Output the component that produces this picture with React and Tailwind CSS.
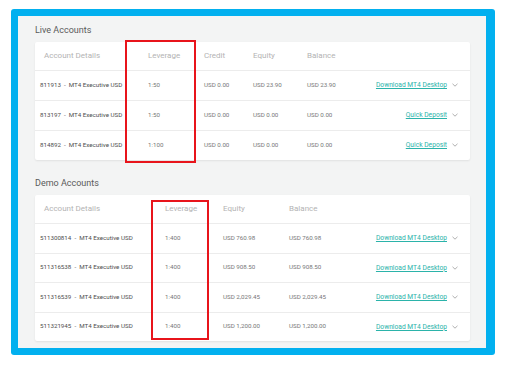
import { useMemo } from "react";

const liveAccounts = [
  { id: "811913", leverage: "1:50", credit: "USD 0.00", equity: "USD 23.90", balance: "USD 23.90", action: "Download MT4 Desktop" },
  { id: "813197", leverage: "1:50", credit: "USD 0.00", equity: "USD 0.00", balance: "USD 0.00", action: "Quick Deposit" },
  { id: "814892", leverage: "1:100", credit: "USD 0.00", equity: "USD 0.00", balance: "USD 0.00", action: "Quick Deposit" },
];

const demoAccounts = [
  { id: "511300814", leverage: "1:400", equity: "USD 760.98", balance: "USD 760.98" },
  { id: "511316538", leverage: "1:400", equity: "USD 908.50", balance: "USD 908.50" },
  { id: "511316539", leverage: "1:400", equity: "USD 2,029.45", balance: "USD 2,029.45" },
  { id: "511321945", leverage: "1:400", equity: "USD 1,200.00", balance: "USD 1,200.00" },
];

function Chevron() {
  return (
    <svg width="6" height="4" viewBox="0 0 6 4" className="ml-[5px] shrink-0">
      <path d="M0.5 0.8 L3 3.2 L5.5 0.8" fill="none" stroke="#9a9a9a" strokeWidth="0.8" />
    </svg>
  );
}

function ActionCell({ label }) {
  return (
    <div className="flex flex-1 items-center justify-end">
      <a className="cursor-pointer text-[6.7px] text-[#2bb3aa] underline underline-offset-1">{label}</a>
      <Chevron />
    </div>
  );
}

function SectionTitle({ children, className = "" }) {
  return <h2 className={`pl-[17px] text-[9px] leading-[12px] text-[#5a5a5a] ${className}`}>{children}</h2>;
}

function App() {
  const font = useMemo(() => ({ fontFamily: "Roboto, 'Liberation Sans', sans-serif" }), []);

  return (
    <div className="relative h-[369px] w-[516px] bg-white pl-[11px] pt-[9px]" style={font}>
      <div className="h-[346px] w-[484px] rounded-[3px] bg-[#02b0ef] pb-[7px] pl-[7px] pr-[9px] pt-[7px]">
        <div className="h-full bg-[#f3f4f4] pt-[8px]">
          {/* Live Accounts */}
          <SectionTitle>Live Accounts</SectionTitle>
          <div className="ml-[17px] mr-[16px] mt-[6px] rounded-[2px] bg-white shadow-[0_1px_2px_rgba(0,0,0,0.08)]">
            <div className="flex h-[28px] items-center pl-[9px] pr-[12px] text-[8px] text-[#b3b3b3]">
              <div className="w-[104px]">Account Details</div>
              <div className="w-[56px]">Leverage</div>
              <div className="w-[49px]">Credit</div>
              <div className="w-[54px]">Equity</div>
              <div>Balance</div>
            </div>
            {liveAccounts.map((acc) => (
              <div
                key={acc.id}
                className="flex h-[30px] items-center border-t border-[#ececec] pl-[5px] pr-[12px] text-[6.2px] text-[#777]"
              >
                <div className="w-[108px] text-[#4e4e4e]">
                  {acc.id}&nbsp;&nbsp;-&nbsp;&nbsp;MT4 Executive USD
                </div>
                <div className="w-[56px]">{acc.leverage}</div>
                <div className="w-[49px]">{acc.credit}</div>
                <div className="w-[54px]">{acc.equity}</div>
                <div className="w-[60px]">{acc.balance}</div>
                <ActionCell label={acc.action} />
              </div>
            ))}
          </div>

          {/* Demo Accounts */}
          <SectionTitle className="mt-[17px]">Demo Accounts</SectionTitle>
          <div className="ml-[17px] mr-[16px] mt-[6px] rounded-[2px] bg-white shadow-[0_1px_2px_rgba(0,0,0,0.08)]">
            <div className="flex h-[28px] items-center pl-[9px] pr-[12px] text-[8px] text-[#b3b3b3]">
              <div className="w-[121px]">Account Details</div>
              <div className="w-[58px]">Leverage</div>
              <div className="w-[66px]">Equity</div>
              <div>Balance</div>
            </div>
            {demoAccounts.map((acc) => (
              <div
                key={acc.id}
                className="flex h-[29.5px] items-center border-t border-[#ececec] pl-[5px] pr-[12px] text-[6.2px] text-[#777]"
              >
                <div className="w-[125px] text-[#4e4e4e]">
                  {acc.id}&nbsp;&nbsp;-&nbsp;&nbsp;MT4 Executive USD
                </div>
                <div className="w-[58px]">{acc.leverage}</div>
                <div className="w-[66px]">{acc.equity}</div>
                <div className="w-[70px]">{acc.balance}</div>
                <ActionCell label="Download MT4 Desktop" />
              </div>
            ))}
          </div>
        </div>
      </div>

      {/* highlight boxes */}
      <div className="absolute left-[125px] top-[40px] h-[123px] w-[71px] border-2 border-[#e8141b]" />
      <div className="absolute left-[151px] top-[200px] h-[140px] w-[58px] border-2 border-[#e8141b]" />
    </div>
  );
}

export default App;
